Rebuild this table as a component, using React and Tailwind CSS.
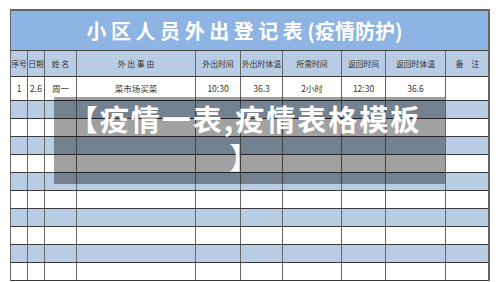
const cols = "grid grid-cols-[17px_17px_32px_119px_45px_42px_59px_44px_60px_43px]";

const headers = ["序号", "日期", "姓 名", "外 出 事 由", "外出时间", "外出时体温", "所需时间", "返回时间", "返回时体温", "备　注"];
const first = ["1", "2.6", "周一", "菜市场买菜", "10:30", "36.3", "2小时", "12:30", "36.6", ""];

function Row({ cells, height, blue, size }) {
  return (
    <div className={`${cols} ${height} ${blue ? "bg-[#b8cce4]" : "bg-white"} border-b border-[#3a3a3a]`}>
      {cells.map((c, i) => (
        <div
          key={i}
          className={`flex items-center justify-center whitespace-nowrap overflow-hidden ${size} text-[#333] ${i < 9 ? "border-r border-[#666]" : ""}`}
        >
          {c}
        </div>
      ))}
    </div>
  );
}

export default function App() {
  const empty = Array(10).fill("");
  return (
    <div className="relative w-[500px] h-[282px] overflow-hidden bg-white font-['Noto_Sans_CJK_SC','Noto_Sans',sans-serif]">
      <div className="ml-[10px] mt-[9px] w-[480px] border-t-2 border-l border-r-2 border-[#666]">
        <div className="h-[40px] bg-[#8db4e2] border-b border-[#444] flex items-center justify-center pr-[10px] text-white font-bold text-[20px]">
          小 区 人 员 外 出 登 记 表 (疫情防护)
        </div>
        <Row cells={headers} height="h-[26px]" size="text-[7.8px]" blue />
        <Row cells={first} height="h-[24px]" size="text-[8.5px]" />
        {Array.from({ length: 10 }).map((_, i) => (
          <Row key={i} cells={empty} height="h-[18px]" size="text-[8px]" blue={i % 2 === 0} />
        ))}
      </div>

      <div className="absolute left-[54px] top-[97px] w-[391px] h-[87px] bg-[rgba(0,0,0,0.37)] pt-[2px] pr-[9px] text-center text-white font-bold text-[29px] leading-[38px] tracking-[2px]">
        【疫情一表,疫情表格模板
        <br />】
      </div>
    </div>
  );
}
